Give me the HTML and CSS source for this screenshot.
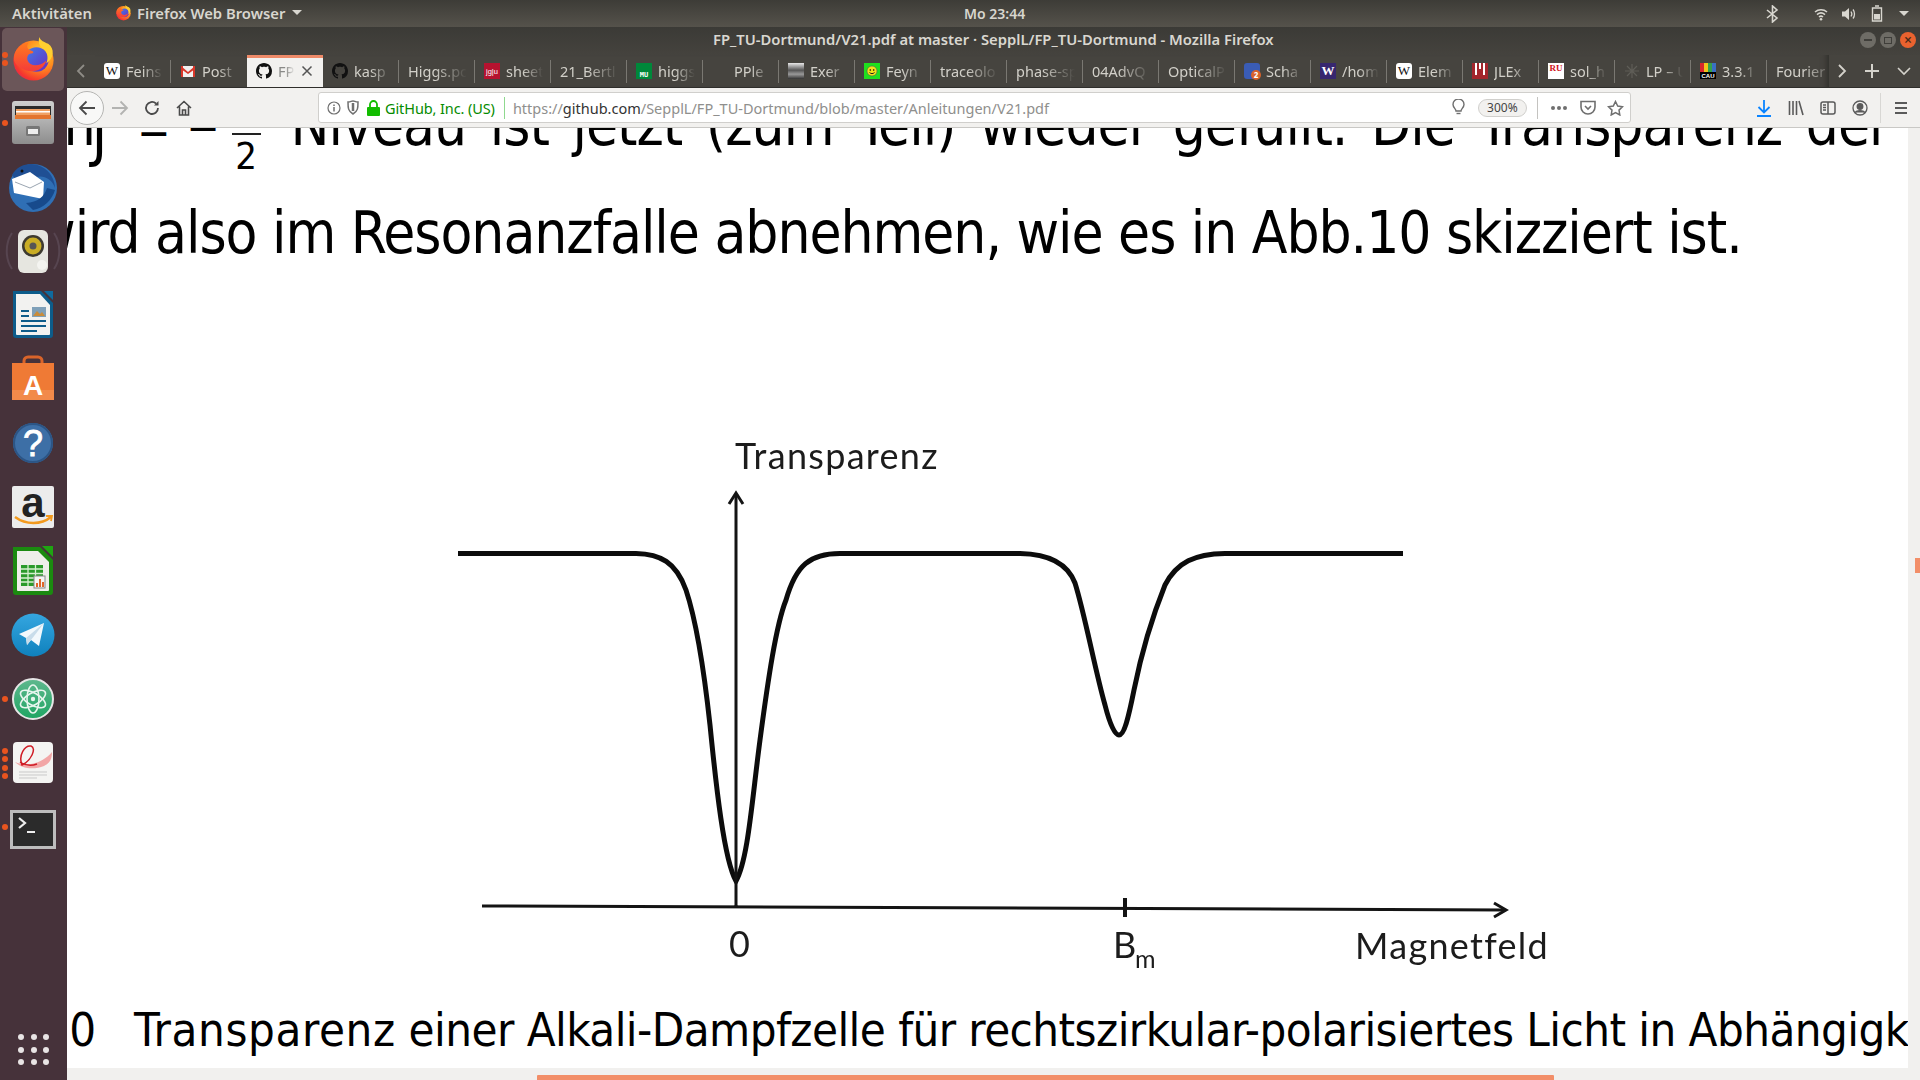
FILE: index.html
```html
<!DOCTYPE html>
<html lang="de">
<head>
<meta charset="UTF-8">
<title>FP_TU-Dortmund/V21.pdf at master - Mozilla Firefox</title>
<link rel="stylesheet" href="styles.css">
</head>
<body>
<svg class="defs" width="0" height="0">
    <defs>
        <radialGradient id="foxBody" cx="0.7" cy="0.3" r="0.9">
            <stop offset="0" stop-color="#ffd22e"/>
            <stop offset="0.45" stop-color="#ff8a1e"/>
            <stop offset="0.8" stop-color="#f5352f"/>
            <stop offset="1" stop-color="#d81e6a"/>
        </radialGradient>
        <linearGradient id="foxGlobe" x1="0" y1="0" x2="1" y2="1">
            <stop offset="0" stop-color="#3f7fe8"/>
            <stop offset="1" stop-color="#6a2bc0"/>
        </linearGradient>
        <linearGradient id="foxTail" x1="0" y1="0" x2="0" y2="1">
            <stop offset="0" stop-color="#ff7a1e"/>
            <stop offset="1" stop-color="#f53c3a"/>
        </linearGradient>
        <symbol id="firefox" viewBox="0 0 48 48">
            <circle cx="24" cy="26" r="20.5" fill="url(#foxBody)"/>
            <circle cx="27" cy="25" r="12.5" fill="url(#foxGlobe)"/>
            <path d="M4 24C4 15 11 9 19 8C16 12 18 15 22 16C25 17 24 19 21 19C18 20 17 23 18 26C20 32 30 33 37 26C35 35 25 39 16 36C8 33 4 29 4 24Z" fill="url(#foxTail)"/>
            <path d="M30 2C28 9 31 12 35 15C39 19 39 25 37 29C45 24 46 14 39 9C35 7 31 6 30 2Z" fill="#ffcf30"/>
        </symbol>
        <symbol id="github" viewBox="0 0 16 16">
            <path d="M8 0C3.58 0 0 3.58 0 8c0 3.54 2.29 6.53 5.47 7.59.4.07.55-.17.55-.38 0-.19-.01-.82-.01-1.49-2.01.37-2.53-.49-2.69-.94-.09-.23-.48-.94-.82-1.13-.28-.15-.68-.52-.01-.53.63-.01 1.08.58 1.23.82.72 1.21 1.87.87 2.33.66.07-.52.28-.87.51-1.07-1.78-.2-3.64-.89-3.64-3.95 0-.87.31-1.59.82-2.15-.08-.2-.36-1.02.08-2.12 0 0 .67-.21 2.2.82.64-.18 1.32-.27 2-.27.68 0 1.36.09 2 .27 1.53-1.04 2.2-.82 2.2-.82.44 1.1.16 1.92.08 2.12.51.56.82 1.27.82 2.15 0 3.07-1.87 3.75-3.65 3.95.29.25.54.73.54 1.48 0 1.07-.01 1.93-.01 2.2 0 .21.15.46.55.38A8.013 8.013 0 0016 8c0-4.42-3.58-8-8-8z" fill="#111"/>
        </symbol>
    </defs>
</svg>

<header class="topbar">
    <div class="topbar-left">
        <span class="activities">Aktivitäten</span>
        <span class="appmenu">
            <svg class="appmenu-icon" width="17" height="17"><use href="#firefox"/></svg>
            Firefox Web Browser
            <i class="caret"></i>
        </span>
    </div>
    <span class="clock">Mo 23:44</span>
    <div class="tray">
        <svg class="tray-bt" width="16" height="18" viewBox="0 0 16 18" fill="none" stroke="#d8d6cf" stroke-width="1.6"><path d="M2 5l10 8-4.5 4V1L12 5 2 13"/></svg>
        <svg class="tray-wifi" width="14" height="14" viewBox="0 0 14 14" fill="none" stroke="#d8d6cf" stroke-width="1.6"><path d="M1 5c3.4-3 8.6-3 12 0M3 7.6c2.4-2 5.6-2 8 0M5 10c1.2-1 2.8-1 4 0"/><circle cx="7" cy="12.3" r="1.3" fill="#d8d6cf" stroke="none"/></svg>
        <svg class="tray-vol" width="16" height="16" viewBox="0 0 16 16" fill="none" stroke="#d8d6cf" stroke-width="1.3"><path d="M1 5.5h3L8 2v12L4 10.5H1z" fill="#d8d6cf" stroke="none"/><path d="M10 5.5c1 1.5 1 3.5 0 5M12 3.5c2 2.5 2 6.5 0 9"/></svg>
        <svg class="tray-bat" width="12" height="17" viewBox="0 0 12 17" fill="none" stroke="#d8d6cf" stroke-width="1.4"><path d="M4 1h4M1.5 3h9v13h-9z"/><path d="M3 9h6v5.5H3z" fill="#d8d6cf" stroke="none"/></svg>
        <i class="caret"></i>
    </div>
</header>

<div class="desktop">
    <nav class="dock">
        <div class="dock-item dock-active">
            <i class="dot dot-a"></i><i class="dot dot-b"></i>
            <svg class="dock-fox" width="47" height="47"><use href="#firefox"/></svg>
        </div>
        <div class="dock-item">
            <i class="dot dot-mid"></i>
            <svg viewBox="0 0 67 64" width="67" height="64">
                <defs><linearGradient id="cab" x1="0" y1="0" x2="0" y2="1"><stop offset="0" stop-color="#cfcfcf"/><stop offset="1" stop-color="#8d8d8d"/></linearGradient></defs>
                <rect x="12" y="10" width="42" height="43" rx="3" fill="url(#cab)"/>
                <rect x="15" y="15" width="36" height="13" fill="#2a2a2a"/>
                <rect x="16" y="18" width="34" height="6" fill="#f0a165"/>
                <rect x="16" y="20" width="34" height="1.5" fill="#fff"/>
                <rect x="15" y="24" width="36" height="4" fill="#e3752f"/>
                <rect x="26" y="35" width="14" height="10" rx="1.5" fill="#777"/>
                <rect x="28" y="38" width="10" height="5" fill="#eee"/>
            </svg>
        </div>
        <div class="dock-item">
            <svg viewBox="0 0 67 64" width="67" height="64">
                <circle cx="33" cy="33" r="24" fill="#2f6fb5"/>
                <path d="M12 20C18 9 32 6 42 12C50 16 55 25 55 33C52 24 44 20 36 22L17 26Z" fill="#1f4f94"/>
                <path d="M12 24L30 17L44 27L43 44L14 38Z" fill="#fff"/>
                <path d="M15 27L30 33L42 27" fill="none" stroke="#9aa5b1" stroke-width="1"/>
                <path d="M33 55C44 53 52 45 55 35L47 33C44 42 38 47 26 48Z" fill="#174a8c"/>
                <circle cx="22" cy="16" r="1.5" fill="#111"/>
            </svg>
        </div>
        <div class="dock-item">
            <svg viewBox="0 0 67 64" width="67" height="64">
                <path d="M12 14C5 24 5 40 12 50M54 14C61 24 61 40 54 50" fill="none" stroke="#574550" stroke-width="2"/>
                <rect x="18" y="11" width="30" height="43" rx="6" fill="#e6e6e0"/>
                <circle cx="33" cy="27" r="11" fill="#3d3a30"/>
                <circle cx="33" cy="27" r="8.5" fill="#c9ad25"/>
                <circle cx="33" cy="27" r="3.5" fill="#555"/>
                <circle cx="42" cy="46" r="5" fill="#f4f4f0"/>
            </svg>
        </div>
        <div class="dock-item">
            <svg viewBox="0 0 67 64" width="67" height="64">
                <path d="M13 8H41L53 20V52a3 3 0 0 1-3 3H16a3 3 0 0 1-3-3Z" fill="#0d5c8a"/>
                <path d="M16 11H40L50 22V51a1 1 0 0 1-1 1H17a1 1 0 0 1-1-1Z" fill="#f2f2f0"/>
                <path d="M44 8H53V17Z" fill="#0f6a9e"/>
                <path d="M21 27h8v2h-8zM21 32h8v2h-8zM21 37h25v2H21zM21 42h25v2H21zM21 47h16v2H21z" fill="#0d5c8a"/>
                <rect x="32" y="24" width="14" height="10" fill="#7fa0b8"/>
                <path d="M33 33l4-5 3 3 2-2 3 4Z" fill="#c98c3a"/>
            </svg>
        </div>
        <div class="dock-item">
            <svg viewBox="0 0 67 64" width="67" height="64">
                <path d="M24 18V14a4 4 0 0 1 4-4h10a4 4 0 0 1 4 4v4" fill="none" stroke="#d9642a" stroke-width="3"/>
                <rect x="12" y="16" width="42" height="37" fill="#ef7a35"/>
                <rect x="12" y="43" width="42" height="10" fill="#f28a4a"/>
                <text x="33" y="48" class="dock-letter" text-anchor="middle">A</text>
            </svg>
        </div>
        <div class="dock-item">
            <svg viewBox="0 0 67 64" width="67" height="64">
                <circle cx="33" cy="32" r="20" fill="#3d6fa6"/>
                <circle cx="33" cy="32" r="19" fill="none" stroke="#2c5585" stroke-width="2"/>
                <text x="33" y="45" class="dock-help" text-anchor="middle">?</text>
            </svg>
        </div>
        <div class="dock-item">
            <svg viewBox="0 0 67 64" width="67" height="64">
                <rect x="12" y="11" width="42" height="42" rx="2" fill="#ececec"/>
                <text x="33" y="42" class="dock-amazon" text-anchor="middle">a</text>
                <path d="M15 42C26 50 41 50 51 42" fill="none" stroke="#f39a1f" stroke-width="2.5"/>
                <path d="M46 41l6 0-1 5" fill="none" stroke="#f39a1f" stroke-width="1.8"/>
            </svg>
        </div>
        <div class="dock-item">
            <svg viewBox="0 0 67 64" width="67" height="64">
                <path d="M13 8H40L53 21V53a3 3 0 0 1-3 3H16a3 3 0 0 1-3-3Z" fill="#1b8a10"/>
                <path d="M17 12H38L49 23V51a1 1 0 0 1-1 1H18a1 1 0 0 1-1-1Z" fill="#eeeeea"/>
                <path d="M42 7H53V18Z" fill="#1fa512"/>
                <rect x="21" y="26" width="22" height="21" fill="#2a9a2a"/>
                <path d="M21 30h22M21 34.5h22M21 39h22M21 43h22M28 26v21M35.5 26v21" stroke="#d6efd0" stroke-width="1.3"/>
                <rect x="34" y="37" width="11" height="12" fill="#f5f5f5" stroke="#888"/>
                <path d="M36 48v-4h2v4zM39 48v-8h2v8zM42 48v-5h2v5z" fill="#e0662a"/>
            </svg>
        </div>
        <div class="dock-item">
            <svg viewBox="0 0 67 64" width="67" height="64">
                <defs><linearGradient id="tg" x1="0" y1="0" x2="0" y2="1"><stop offset="0" stop-color="#35a6e0"/><stop offset="1" stop-color="#0f81bd"/></linearGradient></defs>
                <circle cx="33" cy="32" r="21.5" fill="url(#tg)"/>
                <path d="M19 31L44 20L39 43L31 37L27 42L26 35Z" fill="#f2f8fc"/>
                <path d="M26 35L44 20L31 37L27 42Z" fill="#c8dcea"/>
            </svg>
        </div>
        <div class="dock-item">
            <i class="dot dot-mid"></i>
            <svg viewBox="0 0 67 64" width="67" height="64">
                <defs><linearGradient id="atomg" x1="0" y1="0" x2="0" y2="1"><stop offset="0" stop-color="#5fb88e"/><stop offset="1" stop-color="#1fa563"/></linearGradient></defs>
                <circle cx="33" cy="32" r="20" fill="url(#atomg)" stroke="#e6e6e6" stroke-width="2"/>
                <g fill="none" stroke="#e8f5ee" stroke-width="1.6">
                    <ellipse cx="33" cy="32" rx="14" ry="6" transform="rotate(30 33 32)"/>
                    <ellipse cx="33" cy="32" rx="14" ry="6" transform="rotate(-30 33 32)"/>
                    <ellipse cx="33" cy="32" rx="14" ry="6" transform="rotate(90 33 32)"/>
                </g>
                <circle cx="33" cy="32" r="2.2" fill="#e8f5ee"/>
            </svg>
        </div>
        <div class="dock-item">
            <i class="dot dot-e1"></i><i class="dot dot-e2"></i><i class="dot dot-e3"></i><i class="dot dot-e4"></i>
            <svg viewBox="0 0 67 64" width="67" height="64">
                <rect x="13" y="11" width="40" height="41" rx="4" fill="#f4f4f2"/>
                <path d="M15 31C28 37 44 31 52 21C52 28 50 32 44 35C34 39 22 38 15 31Z" fill="#f2a6a6"/>
                <path d="M22 34C18 24 25 14 31 15C37 17 31 30 22 34ZM20 31C26 35 32 35 37 33" fill="none" stroke="#cf1b24" stroke-width="1.5"/>
                <path d="M19 41h28M19 44h28M19 47h18" stroke="#c9c9c9" stroke-width="1"/>
            </svg>
        </div>
        <div class="dock-item">
            <i class="dot dot-term"></i>
            <svg viewBox="0 0 67 64" width="67" height="64">
                <rect x="11.5" y="16.5" width="43" height="36" fill="#2b2b2b" stroke="#bdbdbd" stroke-width="3"/>
                <path d="M19 23l6 5-6 5" fill="none" stroke="#eee" stroke-width="2.2"/>
                <rect x="27" y="36" width="8" height="2" fill="#eee"/>
            </svg>
        </div>
        <div class="app-grid">
            <i></i><i></i><i></i><i></i><i></i><i></i><i></i><i></i><i></i>
        </div>
    </nav>

    <div class="browser">
        <div class="titlebar">
            <span class="window-title">FP_TU-Dortmund/V21.pdf at master · SepplL/FP_TU-Dortmund - Mozilla Firefox</span>
            <div class="window-buttons">
                <span class="winbtn"><i class="win-min"></i></span>
                <span class="winbtn"><i class="win-max"></i></span>
                <span class="winbtn winbtn-close">×</span>
            </div>
        </div>

        <div class="tabstrip">
            <span class="tab-arrow tab-arrow-left">
                <svg width="10" height="16" viewBox="0 0 10 16" fill="none" stroke="#8e8c86" stroke-width="1.8"><path d="M8 2L2 8l6 6"/></svg>
            </span>
            <div class="tabs">
                <div class="tab"><span class="fav fav-wiki">W</span><span class="tab-label">Feins</span></div>
                <div class="tab"><span class="fav"><svg width="16" height="16" viewBox="0 0 16 16"><rect x="1" y="3" width="14" height="11" fill="#f1f1f1"/><path d="M1 3l7 6 7-6v3l-7 5-7-5z" fill="#d8372a"/><path d="M1 3h2v11H1zM13 3h2v11h-2z" fill="#d8372a"/></svg></span><span class="tab-label">Post</span></div>
                <div class="tab tab-active"><span class="fav"><svg width="16" height="16"><use href="#github"/></svg></span><span class="tab-label tab-label-short">FP</span><span class="tab-close">
                    <svg width="12" height="12" viewBox="0 0 12 12" fill="none" stroke="#555" stroke-width="1.5"><path d="M1.5 1.5l9 9M10.5 1.5l-9 9"/></svg></span></div>
                <div class="tab"><span class="fav"><svg width="16" height="16"><use href="#github"/></svg></span><span class="tab-label">kasp</span></div>
                <div class="tab"><span class="tab-label">Higgs.pc</span></div>
                <div class="tab"><span class="fav fav-jgu">jg|u</span><span class="tab-label">sheet</span></div>
                <div class="tab"><span class="tab-label">21_Bertl</span></div>
                <div class="tab"><span class="fav fav-lmu">MU</span><span class="tab-label">higgs</span></div>
                <div class="tab"><span class="fav"></span><span class="tab-label">PPle</span></div>
                <div class="tab"><span class="fav fav-photo"></span><span class="tab-label">Exer</span></div>
                <div class="tab"><span class="fav fav-smile"><svg width="16" height="16" viewBox="0 0 16 16"><circle cx="8" cy="8" r="5" fill="#f3e21a" stroke="#555" stroke-width=".6"/><circle cx="6.3" cy="7" r=".8"/><circle cx="9.7" cy="7" r=".8"/><path d="M5.5 9.5c1.5 1.5 3.5 1.5 5 0" fill="none" stroke="#222"/></svg></span><span class="tab-label">Feyn</span></div>
                <div class="tab"><span class="tab-label">traceolo</span></div>
                <div class="tab"><span class="tab-label">phase-sp</span></div>
                <div class="tab"><span class="tab-label">04AdvQ</span></div>
                <div class="tab"><span class="tab-label">OpticalP</span></div>
                <div class="tab"><span class="fav fav-schau"><i class="fav-badge">2</i></span><span class="tab-label">Scha</span></div>
                <div class="tab"><span class="fav fav-uw">W</span><span class="tab-label">/hom</span></div>
                <div class="tab"><span class="fav fav-wiki">W</span><span class="tab-label">Elem</span></div>
                <div class="tab"><span class="fav"><svg width="16" height="16" viewBox="0 0 16 16"><rect width="16" height="16" fill="#a3262c"/><path d="M3 0h2v12H3zM7 0h2v6H7zM11 0h2v12h-2z" fill="#fff"/></svg></span><span class="tab-label">JLEx</span></div>
                <div class="tab"><span class="fav fav-ru">RU</span><span class="tab-label">sol_h</span></div>
                <div class="tab"><span class="fav"><svg width="16" height="16" viewBox="0 0 16 16" fill="none" stroke="#5f5d57" stroke-width="1.2"><path d="M8 1v14M1 8h14M3 3l10 10M13 3L3 13"/></svg></span><span class="tab-label">LP – U</span></div>
                <div class="tab"><span class="fav"><svg width="16" height="16" viewBox="0 0 16 16"><rect width="16" height="16" fill="#000"/><path d="M0 0h4v9H0z" fill="#d8262c"/><path d="M4 0h4v9H4z" fill="#f2c21a"/><path d="M8 0h4v9H8z" fill="#35a24a"/><path d="M12 0h4v9h-4z" fill="#3a6fc4"/><text x="8" y="15" class="fav-cau" text-anchor="middle">CAU</text></svg></span><span class="tab-label">3.3.1</span></div>
                <div class="tab"><span class="tab-label">Fourier</span></div>
            </div>
            <div class="tab-controls">
                <svg width="10" height="16" viewBox="0 0 10 16" fill="none" stroke="#d4d2cb" stroke-width="1.8"><path d="M2 2l6 6-6 6"/></svg>
                <svg width="16" height="16" viewBox="0 0 16 16" fill="none" stroke="#d4d2cb" stroke-width="2"><path d="M8 1v14M1 8h14"/></svg>
                <svg width="14" height="10" viewBox="0 0 14 10" fill="none" stroke="#d4d2cb" stroke-width="1.6"><path d="M1 2l6 6 6-6"/></svg>
            </div>
        </div>

        <div class="navbar">
            <span class="back-btn">
                <svg width="18" height="16" viewBox="0 0 18 16" fill="none" stroke="#4a4a4a" stroke-width="1.8"><path d="M17 8H2M8.5 1.5L2 8l6.5 6.5"/></svg>
            </span>
            <svg class="nav-fwd" width="18" height="16" viewBox="0 0 18 16" fill="none" stroke="#b3b3b1" stroke-width="1.8"><path d="M1 8h15M9.5 1.5L16 8l-6.5 6.5"/></svg>
            <svg class="nav-reload" width="16" height="16" viewBox="0 0 16 16" fill="none" stroke="#4a4a4a" stroke-width="1.8"><path d="M14 8a6 6 0 1 1-2-4.5"/><path d="M14.5 1v4.5H10z" fill="#4a4a4a" stroke="none"/></svg>
            <svg class="nav-home" width="16" height="16" viewBox="0 0 16 16" fill="none" stroke="#4a4a4a" stroke-width="1.6"><path d="M1 8l7-6.5L15 8M3.5 6.5V15h9V6.5M6.5 15v-5h3v5"/></svg>

            <div class="urlbar">
                <svg class="url-info" width="14" height="14" viewBox="0 0 14 14" fill="none" stroke="#6f6f6f" stroke-width="1.2"><circle cx="7" cy="7" r="6"/><path d="M7 6v4.5M7 3.5v1.4" stroke-width="1.5"/></svg>
                <svg class="url-shield" width="12" height="15" viewBox="0 0 12 15" fill="none" stroke="#6f6f6f" stroke-width="1.5"><path d="M1 2c3 0 3-1 5-1s2 1 5 1c0 6 0 9-5 12C1 11 1 8 1 2Z"/><path d="M6 3v8" stroke-width="2.5"/></svg>
                <svg class="url-lock" width="13" height="16" viewBox="0 0 13 16"><path d="M3 7V4.5a3.5 3.5 0 0 1 7 0V7" fill="none" stroke="#12bc00" stroke-width="1.8"/><rect y="7" width="13" height="9" rx="1" fill="#12bc00"/></svg>
                <span class="url-org">GitHub, Inc. (US)</span>
                <i class="url-sep"></i>
                <span class="url-text">https://<b>github.com</b>/SepplL/FP_TU-Dortmund/blob/master/Anleitungen/V21.pdf</span>
                <svg class="url-bulb" width="13" height="17" viewBox="0 0 13 17" fill="none" stroke="#6f6f6f" stroke-width="1.4"><path d="M4 12c0-2-3-3.5-3-6.5a5.5 5.5 0 0 1 11 0c0 3-3 4.5-3 6.5z"/><path d="M4.5 14.5h4"/></svg>
                <span class="url-zoom">300%</span>
                <i class="url-sep url-sep-grey"></i>
                <span class="url-dots"><i></i><i></i><i></i></span>
                <svg class="url-pocket" width="16" height="15" viewBox="0 0 16 15" fill="none" stroke="#6f6f6f" stroke-width="1.6"><path d="M1 1.5h14V7a7 7 0 0 1-14 0Z"/><path d="M5 6l3 3 3-3"/></svg>
                <svg class="url-star" width="17" height="16" viewBox="0 0 17 16" fill="none" stroke="#6f6f6f" stroke-width="1.5"><path d="M8.5 1.5l2.2 4.5 4.8.7-3.5 3.4.8 4.9-4.3-2.3-4.3 2.3.8-4.9L1.5 6.7l4.8-.7z"/></svg>
            </div>

            <div class="toolbar-right">
                <svg class="tool-dl" width="16" height="18" viewBox="0 0 16 18" fill="none" stroke="#0a84ff" stroke-width="1.8"><path d="M8 1v12M2.5 8L8 13.5 13.5 8M1 17h14"/></svg>
                <svg class="tool-lib" width="16" height="16" viewBox="0 0 16 16" fill="none" stroke="#5a5a5a" stroke-width="1.6"><path d="M1.5 1v14M5 1v14M8.5 1v14M11 1l4 14"/></svg>
                <svg class="tool-side" width="16" height="14" viewBox="0 0 16 14" fill="none" stroke="#5a5a5a" stroke-width="1.5"><rect x="1" y="1" width="14" height="12" rx="2"/><path d="M8 1v12M3 4h3M3 6.5h3M3 9h3"/></svg>
                <svg class="tool-acc" width="16" height="16" viewBox="0 0 16 16" fill="none" stroke="#5a5a5a" stroke-width="1.3"><circle cx="8" cy="8" r="7"/><circle cx="8" cy="6.5" r="2.8" fill="#5a5a5a"/><path d="M3 12.5c2-2.5 8-2.5 10 0" fill="#5a5a5a"/></svg>
                <i class="tool-sep"></i>
                <svg class="tool-menu" width="14" height="12" viewBox="0 0 14 12" fill="none" stroke="#5a5a5a" stroke-width="1.8"><path d="M1 1h12M1 6h12M1 11h12"/></svg>
            </div>
        </div>

        <div class="viewer">
            <main class="pdf">
                <div class="pdf-line line-top">
                    <span class="mj">m<span class="mj-sub">J</span></span>
                    <span class="math math-eq">=</span>
                    <span class="math math-minus">−</span>
                    <span class="frac">2</span>
                    <span class="line-top-text">Niveau ist jetzt (zum Teil) wieder gefüllt. Die Transparenz der</span>
                </div>
                <p class="pdf-line line-second">wird also im Resonanzfalle abnehmen, wie es in Abb.10 skizziert ist.</p>

                <svg class="chart" viewBox="67 430 1841 560" width="1841" height="560">
                    <g class="chart-art">
                        <path class="curve" d="M458 553.5L636 553.5C660 554 676 562 686 590C696 620 704 670 710 725C716 785 724 860 736 881C748 860 752 800 760 740C768 680 776 625 786 600C796 565 810 553.5 840 553.5L1020 553.5C1050 554 1068 565 1075 583C1085 615 1095 670 1105 705C1110 725 1115 735 1119 735C1124 735 1128 720 1134 690C1142 650 1155 610 1165 585C1177 562 1195 554 1225 553.5L1403 553.5"/>
                        <path class="axis" d="M482 906L1505 910M736 494V906"/>
                        <path class="axis" d="M729 504L736 493L743 504M1494 903L1506 910L1494 917"/>
                        <path class="tick" d="M1125 898V917"/>
                        <text x="735" y="469" class="chart-label">Transparenz</text>
                        <text x="729" y="957" class="chart-label">0</text>
                        <text x="1113" y="958" class="chart-label">B</text>
                        <text x="1135" y="968" class="chart-sub">m</text>
                        <text x="1355" y="959" class="chart-label">Magnetfeld</text>
                    </g>
                </svg>

                <p class="pdf-line caption"><span class="caption-no">10</span><span><span class="caption-first">Transparenz</span> einer Alkali-Dampfzelle für rechtszirkular-polarisiertes Licht in Abhängigkeit</span></p>
            </main>
            <aside class="scrollbar"><i class="scroll-mark"></i></aside>
        </div>
        <div class="bottom-strip"><i class="progress"></i></div>
    </div>
</div>
</body>
</html>
```

FILE: styles.css
```css
* {
    box-sizing: border-box;
}
html, body {
    margin: 0;
    height: 100%;
    overflow: hidden;
}
body {
    width: 1920px;
    height: 1080px;
    display: flex;
    flex-direction: column;
    font-family: "Noto Sans", "DejaVu Sans", sans-serif;
    background: #fff;
}
i {
    display: block;
    font-style: normal;
}
.defs {
    position: absolute;
}

/* gnome top bar */
.topbar {
    height: 27px;
    flex: none;
    display: flex;
    align-items: center;
    justify-content: space-between;
    position: relative;
    padding: 0 11px 0 12px;
    background: linear-gradient(#3d3c37, #55524b);
    color: #d8d6cf;
    font-size: 14.8px;
    font-weight: 600;
}
.topbar-left {
    display: flex;
    align-items: center;
    padding-bottom: 2px;
}
.activities {
    width: 103px;
}
.appmenu {
    display: flex;
    align-items: center;
    gap: 5px;
}
.caret {
    width: 0;
    height: 0;
    border-left: 5px solid transparent;
    border-right: 5px solid transparent;
    border-top: 5px solid #d8d6cf;
}
.appmenu .caret {
    margin-left: 2px;
}
.clock {
    position: absolute;
    left: 964px;
    font-size: 14px;
}
.tray {
    display: flex;
    align-items: center;
}
.tray-bt { margin-right: 33px; }
.tray-wifi { margin-right: 13px; }
.tray-vol { margin-right: 14px; }
.tray-bat { margin-right: 16px; }

.desktop {
    flex: 1;
    display: flex;
    min-height: 0;
}

/* launcher */
.dock {
    width: 67px;
    flex: none;
    display: flex;
    flex-direction: column;
    background: #46323a;
}
.dock-item {
    height: 64px;
    flex: none;
    position: relative;
}
.dock-item svg {
    display: block;
}
.dock-active::before {
    content: "";
    position: absolute;
    left: 2px;
    right: 3px;
    top: 1px;
    bottom: 0;
    border-radius: 5px;
    background: #6b5659;
}
.dock-fox {
    position: absolute;
    left: 10px;
    top: 8px;
}
.dot {
    position: absolute;
    left: 2px;
    width: 6px;
    height: 6px;
    border-radius: 50%;
    background: #e9541f;
    z-index: 1;
}
.dot-a { top: 25px; }
.dot-b { top: 33px; }
.dot-mid { top: 29px; }
.dot-term { top: 29px; }
.dot-e1 { top: 17px; }
.dot-e2 { top: 25px; }
.dot-e3 { top: 34px; }
.dot-e4 { top: 42px; }
.dock-letter {
    font: bold 28px "Liberation Sans", sans-serif;
    fill: #fff;
}
.dock-help {
    font: 36px "Liberation Sans", sans-serif;
    fill: #fff;
    stroke: #fff;
    stroke-width: 0.8;
}
.dock-amazon {
    font: bold 42px "Liberation Sans", sans-serif;
    fill: #222;
}
.app-grid {
    margin-top: auto;
    margin-bottom: 15px;
    margin-left: 18px;
    display: grid;
    grid-template-columns: repeat(3, 6px);
    gap: 6.5px;
}
.app-grid i {
    width: 6px;
    height: 6px;
    border-radius: 50%;
    background: #e8e4e4;
}

.browser {
    flex: 1;
    min-width: 0;
    display: flex;
    flex-direction: column;
}

/* window title */
.titlebar {
    height: 28px;
    flex: none;
    position: relative;
    background: linear-gradient(#3b3a36, #45433e);
    display: flex;
    justify-content: center;
    align-items: center;
    padding-bottom: 2px;
    color: #d9d7d0;
    font-size: 14.8px;
    font-weight: 600;
}
.window-title {
    position: absolute;
    left: 646px;
    top: 2px;
}
.window-buttons {
    position: absolute;
    right: 4px;
    top: 5px;
    display: flex;
    gap: 4px;
}
.winbtn {
    width: 16px;
    height: 16px;
    border-radius: 50%;
    background: #6e6c66;
    display: flex;
    align-items: center;
    justify-content: center;
}
.win-min {
    width: 8px;
    height: 2px;
    background: #3f3e3a;
}
.win-max {
    width: 8px;
    height: 7px;
    border: 1.5px solid #3f3e3a;
}
.winbtn-close {
    background: #e9622f;
    color: #4a2a18;
    font-size: 14px;
    line-height: 1;
}

/* tabs */
.tabstrip {
    height: 33px;
    flex: none;
    display: flex;
    background: #46443f;
    border-bottom: 1px solid #2f2e2b;
    color: #d2d0c9;
    font-size: 14.5px;
}
.tab-arrow {
    width: 28px;
    flex: none;
    display: flex;
    align-items: center;
    padding-left: 9px;
}
.tabs {
    width: 1734px;
    flex: none;
    display: flex;
    overflow: hidden;
    box-shadow: inset -8px 0 6px -6px #2e2d2a;
}
.tab {
    width: 76px;
    flex: none;
    display: flex;
    align-items: center;
    gap: 6px;
    padding: 0 8px 0 9px;
    position: relative;
}
.tab::after {
    content: "";
    position: absolute;
    right: 0;
    top: 5px;
    bottom: 4px;
    width: 1px;
    background: #7a7872;
}
.tab-active {
    background: #f2f1ef;
    border-top: 3px solid #ee8a68;
    padding-bottom: 3px;
    color: #8a8a88;
}
.tab-active::after,
.tab:nth-child(2)::after {
    display: none;
}
.tab-label {
    flex: 1;
    min-width: 0;
    white-space: nowrap;
    overflow: hidden;
    -webkit-mask-image: linear-gradient(90deg, #000 45%, transparent 100%);
    mask-image: linear-gradient(90deg, #000 45%, transparent 100%);
}
.tab-label-short {
    flex: none;
    width: 17px;
}
.tab-close {
    display: flex;
}
.fav {
    width: 16px;
    height: 16px;
    flex: none;
    display: flex;
    align-items: center;
    justify-content: center;
    position: relative;
}
.fav svg {
    display: block;
}
.fav-wiki {
    background: #fff;
    border-radius: 3px;
    color: #111;
    font: 13px "Liberation Serif", serif;
}
.fav-jgu {
    background: #b5122f;
    color: #fff;
    font: 7.5px "Liberation Sans", sans-serif;
}
.fav-lmu {
    background: #00883a;
    color: #fff;
    font: bold 7px "DejaVu Sans Mono", monospace;
    align-items: flex-end;
}
.fav-photo {
    background: linear-gradient(#e8e8e8, #555 45%, #999 70%, #333);
}
.fav-smile {
    background: #1ee01e;
}
.fav-schau {
    background: #3a5cb5;
    border-radius: 3px;
}
.fav-badge {
    position: absolute;
    right: -1px;
    bottom: -1px;
    width: 10px;
    height: 10px;
    border-radius: 50%;
    background: #d9622a;
    color: #fff;
    font-size: 8px;
    font-weight: 700;
    line-height: 10px;
    text-align: center;
}
.fav-uw {
    background: #37276f;
    color: #fff;
    font: bold 13px "Liberation Serif", serif;
}
.fav-ru {
    background: #fff;
    color: #d0121b;
    font: bold 9px "Liberation Serif", serif;
    align-items: flex-start;
}
.fav-cau {
    font: bold 6px "Liberation Sans", sans-serif;
    fill: #fff;
}
.tab-controls {
    flex: 1;
    display: flex;
    align-items: center;
    gap: 17px;
    padding-left: 8px;
}

/* nav toolbar */
.navbar {
    height: 40px;
    flex: none;
    display: flex;
    align-items: center;
    background: #f2f1ef;
    border-bottom: 1px solid #c9c8c5;
    padding-left: 3px;
    position: relative;
}
.back-btn {
    width: 34px;
    height: 34px;
    flex: none;
    border-radius: 50%;
    border: 1px solid #b5b5b3;
    background: #f8f8f7;
    display: flex;
    align-items: center;
    justify-content: center;
}
.nav-fwd { margin-left: 7px; flex: none; }
.nav-reload { margin-left: 15px; flex: none; }
.nav-home { margin-left: 16px; flex: none; }
.urlbar {
    width: 1313px;
    height: 31px;
    margin-left: 126px;
    flex: none;
    display: flex;
    align-items: center;
    background: #fff;
    border: 1px solid #d0cfcc;
    border-radius: 3px;
    font-size: 14.5px;
    padding-left: 8px;
    white-space: nowrap;
}
.url-shield { margin-left: 6px; flex: none; }
.url-lock { margin-left: 8px; flex: none; }
.url-org {
    margin-left: 5px;
    color: #058b00;
    letter-spacing: -0.1px;
}
.url-sep {
    width: 1px;
    height: 22px;
    background: #8fd98f;
    margin: 0 8px 0 9px;
    flex: none;
}
.url-sep-grey {
    background: #c4c3c0;
    margin: 0 0 0 10px;
}
.url-text {
    color: #8f8f8d;
    width: 932px;
    flex: none;
}
.url-text b {
    color: #333;
    font-weight: 400;
}
.url-bulb { flex: none; margin-left: 7px; }
.url-zoom {
    margin-left: 13px;
    width: 49px;
    height: 18px;
    border: 1px solid #d0cfcc;
    border-radius: 9px;
    background: #f2f1ef;
    color: #444;
    font-size: 12px;
    line-height: 16px;
    text-align: center;
    flex: none;
}
.url-dots {
    display: flex;
    gap: 2px;
    margin-left: 13px;
}
.url-dots i {
    width: 4px;
    height: 4px;
    border-radius: 50%;
    background: #6f6f6f;
}
.url-pocket { margin-left: 13px; flex: none; }
.url-star { margin-left: 11px; flex: none; }
.toolbar-right {
    display: flex;
    align-items: center;
    margin-left: 125px;
    height: 100%;
}
.tool-lib { margin-left: 16px; }
.tool-side { margin-left: 16px; }
.tool-acc { margin-left: 16px; }
.tool-sep {
    width: 1px;
    height: 30px;
    background: #d8d7d4;
    margin-left: 12px;
}
.tool-menu { margin-left: 13px; }

/* pdf page */
.viewer {
    flex: 1;
    min-height: 0;
    display: flex;
}
.pdf {
    flex: 1;
    min-width: 0;
    overflow: hidden;
    background: #fff;
    color: #000;
    font-family: "DejaVu Sans Condensed", "DejaVu Sans", sans-serif;
    font-stretch: condensed;
}
.pdf-line {
    margin: 0;
    white-space: nowrap;
}
.line-top {
    display: flex;
    align-items: flex-start;
    font-size: 58px;
    line-height: 58px;
    height: 58px;
    margin-top: -32px;
}
.line-top > span {
    flex: none;
}
.mj {
    margin-left: -22px;
    display: flex;
    align-items: flex-start;
}
.mj-sub {
    margin: 10px 0 0 -4px;
}
.math {
    font-size: 44px;
}
.math-eq {
    margin: 4px 0 0 30px;
}
.math-minus {
    margin: 3px 0 0 16px;
}
.frac {
    font-size: 38px;
    line-height: 38px;
    border-top: 2px solid #222;
    padding: 2px 0 0;
    margin: 37px 0 0 12px;
    width: 29px;
    height: 42px;
    text-align: center;
}
.line-top-text {
    margin-left: 30px;
    letter-spacing: -1px;
    word-spacing: 8px;
}
.line-second {
    font-size: 58px;
    line-height: 58px;
    margin-top: 50px;
    margin-left: -34px;
    letter-spacing: -1.05px;
}
.chart {
    display: block;
    margin-top: 168px;
}
.chart-art {
    filter: blur(0.6px);
}
.curve {
    fill: none;
    stroke: #0c0c0c;
    stroke-width: 5;
}
.axis {
    fill: none;
    stroke: #141414;
    stroke-width: 3;
}
.tick {
    stroke: #141414;
    stroke-width: 4;
}
.chart-label {
    font: 36px Lato, sans-serif;
    letter-spacing: 1.3px;
    fill: #1c1c1c;
}
.chart-sub {
    font: 25px Lato, sans-serif;
    fill: #1c1c1c;
}
.caption {
    display: flex;
    font-size: 47px;
    line-height: 47px;
    margin-top: 16px;
    letter-spacing: -0.56px;
}
.caption-first {
    letter-spacing: 0.6px;
}
.caption-no {
    margin-left: -24px;
    width: 91px;
    flex: none;
}
.scrollbar {
    width: 12px;
    flex: none;
    background: #f1f0ee;
    position: relative;
}
.scroll-mark {
    position: absolute;
    right: 0;
    top: 430px;
    width: 5px;
    height: 15px;
    background: #f28e68;
}
.bottom-strip {
    height: 12px;
    flex: none;
    background: #f1f0ee;
    position: relative;
}
.progress {
    position: absolute;
    left: 470px;
    width: 1017px;
    bottom: 0;
    height: 5px;
    background: #f28e68;
    border-radius: 1px 1px 0 0;
}
```
